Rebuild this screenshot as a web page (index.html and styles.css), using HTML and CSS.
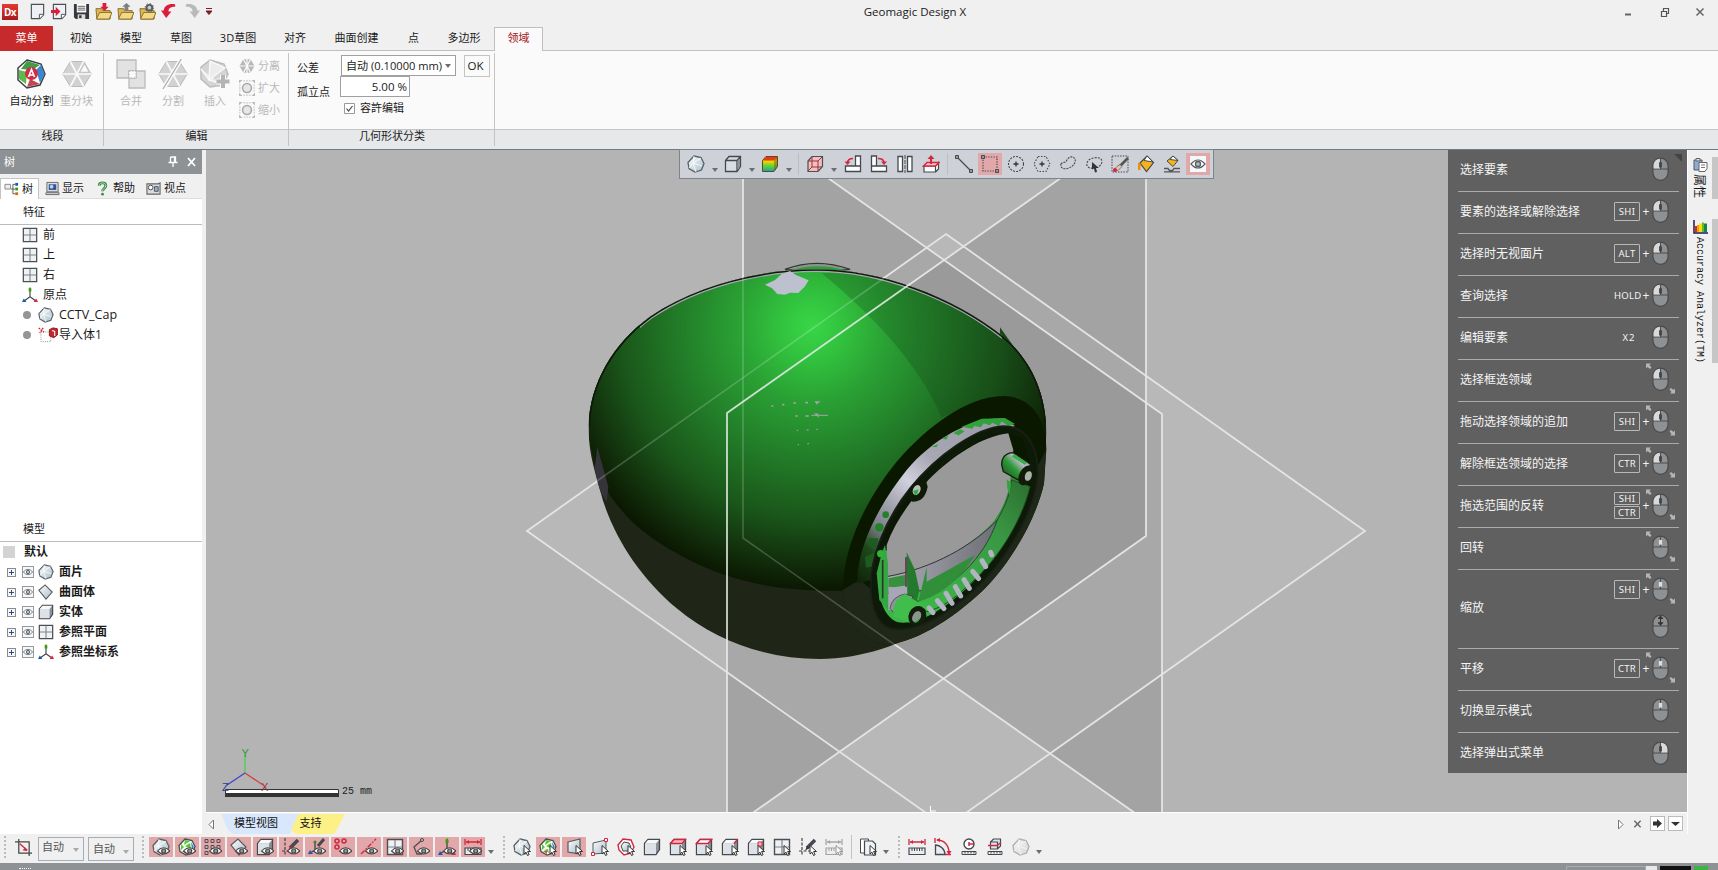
FILE: index.html
```html
<!DOCTYPE html>
<html lang="zh-CN">
<head>
<meta charset="utf-8">
<title>Geomagic Design X</title>
<link rel="stylesheet" href="styles.css">
</head>
<body>
<svg class="defs" width="0" height="0" aria-hidden="true">
<defs>
<linearGradient id="gMesh" x1="0" y1="0" x2="1" y2="1"><stop offset="0" stop-color="#fff"/><stop offset="1" stop-color="#a9bcc6"/></linearGradient>
<linearGradient id="gRain" x1="0" y1="0" x2="0" y2="1"><stop offset="0" stop-color="#f04a10"/><stop offset=".3" stop-color="#ffd400"/><stop offset=".6" stop-color="#6fd52a"/><stop offset="1" stop-color="#19a0b0"/></linearGradient>
<symbol id="mesh" viewBox="0 0 18 18"><path d="M7 1l7 1.500 3 6-2.500 6.500-6.500 2-6-3.500-1-6z" fill="url(#gMesh)" stroke="#55606a" stroke-width="1.300"/><path d="M7 1l-1 7 9 3M6 8l-4 5M6 8l8-5M6 8l3 9" stroke="#fff" stroke-width=".8" fill="none"/></symbol>
<symbol id="meshg" viewBox="0 0 18 18"><path d="M7 1l7 1.500 3 6-2.500 6.500-6.500 2-6-3.500-1-6z" fill="#f4fff0" stroke="#4a4f55" stroke-width="1.300"/><path d="M7 2l5 1-6 4zM3 6l3 3-3 3zM7 8l5-3 1 6zM5 12l4-1 1 4z" fill="#59c43a"/><path d="M13 4l3 5-2 2z" fill="#3c7fd0"/><path d="M4 13l4 0 0 3z" fill="#d85050"/></symbol>
<symbol id="cube" viewBox="0 0 18 18"><path d="M1.500 5.500L5 1.500h11.500v10L13 16.500H1.500z" fill="#8a9198" stroke="#444950" stroke-width="1.300"/><path d="M2 5.500h11v10.500H2z" fill="#dde2e9"/><path d="M2 5.500l3-3.500h11l-3 3.500z" fill="#f6f8fa"/></symbol>
<symbol id="vcube" viewBox="0 0 18 18"><path d="M1.500 5.500L5 1.500h11.500v10L13 16.500H1.500zM1.500 5.500H13v11M13 5.500l3.500-4" fill="#d9dde2" stroke="#444950" stroke-width="1.300"/><path d="M13.600 6v9.200l2.300-3.700V3.300z" fill="#8a9198"/></symbol>
<symbol id="cubetop" viewBox="0 0 18 18"><use href="#cube"/><path d="M1.500 5.500L5 1.500h11.500L13 5.500z" fill="#f9b7b7" stroke="#d22740" stroke-width="1.300"/></symbol>
<symbol id="cubeedge" viewBox="0 0 18 18"><use href="#cube"/><path d="M1.500 5.500L5 1.500h11.500L13 5.500z" fill="#fff" stroke="#d22740" stroke-width="1.500"/></symbol>
<symbol id="cubeln" viewBox="0 0 18 18"><use href="#cube"/><path d="M13 5.500l3.500-4" stroke="#d22740" stroke-width="1.600"/></symbol>
<symbol id="cubept" viewBox="0 0 18 18"><use href="#cube"/><path d="M11 4h4v4h-4z" fill="#fbb" stroke="#d22740"/></symbol>
<symbol id="raincube" viewBox="0 0 18 18"><path d="M1.500 5.500L5 1.500h11.500v10L13 16.500H1.500z" fill="url(#gRain)" stroke="#5a4a20"/><path d="M2 5.500l3-3.500h11l-3 3.500z" fill="#e83a18"/><path d="M13 5.500l3.500-4v10L13 16.500z" fill="#6d5010" opacity=".45"/></symbol>
<symbol id="wirecube" viewBox="0 0 18 18"><path d="M2 6l4-4.500h10.500v10L12 16.500H2z" fill="#f8bcbc" stroke="#4a4f55" stroke-width="1.200"/><path d="M2 6h10v10M12 6l4-4M6 2v10h10M6 12l-4 4" stroke="#8b3a40" fill="none"/></symbol>
<symbol id="viewL" viewBox="0 0 18 18"><path d="M11.500 1h5v10h-5zM1.500 11h15v5.500h-15z" fill="#fff" stroke="#444950" stroke-width="1.300"/><path d="M3.500 8c0-3 2-4.500 5.500-4.500" stroke="#d22740" stroke-width="1.600" fill="none"/><path d="M.5 6.500h6L3.500 10z" fill="#d22740"/></symbol>
<symbol id="viewR" viewBox="0 0 18 18"><path d="M1.500 1h5v10h-5zM1.500 11h15v5.500h-15z" fill="#fff" stroke="#444950" stroke-width="1.300"/><path d="M8 3.500c4 0 6 1.500 6 4.500" stroke="#d22740" stroke-width="1.600" fill="none"/><path d="M11 6.500h6L14 10z" fill="#d22740"/></symbol>
<symbol id="flip" viewBox="0 0 18 18"><path d="M2 1.500h4.500v15H2zM11.500 1.500H16v15h-4.500z" fill="#fff" stroke="#444950" stroke-width="1.300"/><path d="M9 0v18" stroke="#444950" stroke-dasharray="4 1"/></symbol>
<symbol id="normal" viewBox="0 0 18 18"><path d="M2 11h11.500v6H2zM13.500 11l3-3.500V14l-3 3" fill="#fff" stroke="#444950" stroke-width="1.200"/><path d="M1.500 11l3.500-3.500h12L13.500 11z" fill="#fbc3c3" stroke="#d22740" stroke-width="1.400"/><path d="M9 9V3" stroke="#d22740" stroke-width="2"/><path d="M5.500 4L9 0l3.500 4z" fill="#d22740"/></symbol>
<symbol id="line" viewBox="0 0 18 18"><path d="M2 2l14 14" stroke="#444950" stroke-width="1.300"/><path d="M.5.500h3v3h-3zM14.500 14.500h3v3h-3z" fill="#999" stroke="#444950"/></symbol>
<symbol id="rect" viewBox="0 0 18 18"><path d="M2 2h14v14H2z" fill="none" stroke="#444950" stroke-width="1.200" stroke-dasharray="1.300 1.300"/><path d="M.5.500h3v3h-3zM14.500 14.500h3v3h-3z" fill="#999" stroke="#444950"/></symbol>
<symbol id="circ" viewBox="0 0 18 18"><circle cx="9" cy="9" r="7.500" fill="none" stroke="#444950" stroke-width="1.100" stroke-dasharray="2 1.200"/><path d="M9 6.500v5M6.500 9h5" stroke="#333" stroke-width="1.300"/></symbol>
<symbol id="hex" viewBox="0 0 18 18"><path d="M5 1.500h8L17 9l-4 7.500H5L1 9z" fill="none" stroke="#444950" stroke-width="1.100" stroke-dasharray="1.500 1.500"/><path d="M9 6.500v5M6.500 9h5" stroke="#333" stroke-width="1.300"/></symbol>
<symbol id="blob" viewBox="0 0 18 18"><path d="M2 9c2-3 4 0 6-4s7-4 8-1-1 7-6 9-9 0-8-4z" fill="none" stroke="#444950" stroke-width="1.100" stroke-dasharray="2 1"/></symbol>
<symbol id="lasso" viewBox="0 0 18 18"><path d="M8 13c-5 1-8-3-5-7s13-5 14 0c0 3-2 5-4 6" fill="none" stroke="#444950" stroke-width="1.100" stroke-dasharray="2 1.200"/><path d="M7 7l7 6h-3l1 4-2 .5-1-4-2 1z" fill="#333"/></symbol>
<symbol id="brush" viewBox="0 0 18 18"><path d="M1 1h16v16H1z" fill="none" stroke="#444950" stroke-dasharray="1.500 1.200"/><path d="M17 3L9 11" stroke="#555" stroke-width="2.600"/><path d="M9 9.500l2 2-4 4-4-1 3-3z" fill="#e8c8a0" stroke="#555" stroke-width=".7"/><circle cx="4" cy="15" r="2" fill="#d22740"/></symbol>
<symbol id="bucket" viewBox="0 0 18 18"><path d="M3 8l7-7 6.500 6.500-7 9z" fill="#f5b51a" stroke="#444950" stroke-width="1.200"/><path d="M10 1l6 6-9-1.500z" fill="#fff" stroke="#444950"/><path d="M1 8h2.500v7H1z" fill="#f09000"/></symbol>
<symbol id="bucket2" viewBox="0 0 18 18"><path d="M4 6l6-5 5 4.500-5 6z" fill="#f5b51a" stroke="#444950"/><path d="M10 1l5 4.500-8-1z" fill="#fff" stroke="#444950"/><path d="M1 13.500h4c1 3 5 3 6 0h6M1 16.800h16" stroke="#555" fill="none" stroke-width="1.300"/></symbol>
<symbol id="eyebox" viewBox="0 0 18 18"><path d="M1 1h16v16H1z" fill="#f4f8fb"/><path d="M2 9q7-8 14 0-7 8-14 0z" fill="#fff" stroke="#555b60" stroke-width="1.200"/><circle cx="9" cy="9" r="2.500" fill="#bbb" stroke="#555b60" stroke-width="1.300"/></symbol>
<symbol id="eye" viewBox="0 0 18 18"><path d="M5.500 13q6-6.500 12.500 0-6.500 6-12.500 0z" fill="#fff" stroke="#444" stroke-width="1.100"/><circle cx="11.700" cy="13" r="2" fill="#999" stroke="#444" stroke-width="1.200"/></symbol>
<symbol id="cur" viewBox="0 0 18 18"><path d="M11 7.500v8.500l2-1.800 1.500 3.300 1.600-.8-1.500-3.200H17.500z" fill="#fff" stroke="#333" stroke-width="1"/></symbol>
<symbol id="grid9" viewBox="0 0 18 18"><g fill="none" stroke="#4a4f55"><path d="M1 1.500h3v3H1zM7 1.500h3v3H7zM13 1.500h3v3h-3zM1 7.500h3v3H1zM7 7.500h3v3H7zM13 7.500h3v3h-3zM1 13.500h3v3H1z"/></g></symbol>
<symbol id="diam" viewBox="0 0 18 18"><path d="M1 7l7-6 8 8-7 8z" fill="url(#gMesh)" stroke="#555b60" stroke-width="1.200"/></symbol>
<symbol id="sketch" viewBox="0 0 18 18"><path d="M3 0v18M0 13h18" stroke="#444" stroke-width="1.200" stroke-dasharray="3 1.500"/><path d="M16 2L8 10" stroke="#444a50" stroke-width="3.500"/><path d="M8 8l2 2-4 3z" fill="#d22740"/></symbol>
<symbol id="sketchk" viewBox="0 0 18 18"><path d="M3 0v18M0 13h18" stroke="#444" stroke-width="1.200" stroke-dasharray="3 1.500"/><path d="M16 2L8 10" stroke="#444a50" stroke-width="3.500"/><path d="M8 8l2 2-4 3z" fill="#333"/></symbol>
<symbol id="sketch3" viewBox="0 0 18 18"><path d="M7 4v8l-6 4M7 12l6 4" stroke="#444" fill="none" stroke-width="1.300"/><path d="M16 1l-6 7" stroke="#444a50" stroke-width="3"/><circle cx="7" cy="4" r="1.600" fill="#388e1c"/><path d="M0 16l2-4 3 4z" fill="#1c5bb0"/></symbol>
<symbol id="pts" viewBox="0 0 18 18"><g fill="none" stroke="#d22740" stroke-width="1.500"><circle cx="3" cy="3" r="2"/><circle cx="10" cy="3" r="2"/><circle cx="3" cy="9" r="2"/></g></symbol>
<symbol id="rline" viewBox="0 0 18 18"><path d="M1 16L16 1" stroke="#d22740" stroke-width="1.400" stroke-dasharray="5 1.500 1.500 1.500"/></symbol>
<symbol id="plane" viewBox="0 0 18 18"><path d="M1.500 1.500h15v15h-15z" fill="#eff1f2" stroke="#4a4f55" stroke-width="1.400"/><path d="M9 2v14M2 9h14" stroke="#7d8388" stroke-width="1.200"/></symbol>
<symbol id="curve" viewBox="0 0 18 18"><path d="M10 2L2 9l3 7h5" fill="none" stroke="#4a4f55" stroke-width="1.300"/><circle cx="10" cy="2" r="1.500" fill="#ccc" stroke="#444"/></symbol>
<symbol id="axes" viewBox="0 0 18 18"><path d="M9 3v8l-7 5M9 11l7 5" stroke="#444" fill="none" stroke-width="1.300"/><path d="M7.500 5V2L9 0l1.500 2v3z" fill="#3a9a10"/><path d="M0 17l2-4 3 4z" fill="#1c5bb0"/><path d="M18 17l-2-4-3 4z" fill="#d22740"/></symbol>
<symbol id="dim" viewBox="0 0 18 18"><path d="M1 1v6M17 1v6M2 4h14" stroke="#d22740" stroke-width="1.300" fill="none"/><path d="M2 4l3-2v4zM16 4l-3-2v4z" fill="#d22740"/><path d="M1 10h16v6.500H1z" fill="#e9edf1" stroke="#444950" stroke-width="1.200"/><path d="M4 10v3M6.500 10v3M9 10v3M11.500 10v3M14 10v3" stroke="#444"/></symbol>
<symbol id="quad" viewBox="0 0 18 18"><path d="M3 4l12-3v15l-12-2z" fill="url(#gMesh)" stroke="#555b60" stroke-width="1.200"/></symbol>
<symbol id="quadpt" viewBox="0 0 18 18"><path d="M2 5l13-3v13l-13 1z" fill="url(#gMesh)" stroke="#555b60"/><path d="M13.500.500h3v3h-3zM.5 14.500h3v3h-3z" fill="#fff" stroke="#d22740"/></symbol>
<symbol id="ring" viewBox="0 0 18 18"><path d="M6 1l8 1 3 7-3 6-7 2-5-5-1-5z" fill="#fff" stroke="#d22740" stroke-width="1.400"/><path d="M7 4l5 1 2 4-3 4-5 0-2-5z" fill="url(#gMesh)" stroke="#444"/></symbol>
<symbol id="docs" viewBox="0 0 18 18"><path d="M1.500 1h8v14h-8z" fill="#fff" stroke="#444950"/><path d="M5.500 3h8l3 3v11h-11z" fill="#eef1f5" stroke="#444950" stroke-width="1.200"/></symbol>
<symbol id="angle" viewBox="0 0 18 18"><path d="M1.500 7v9.500H11C11 11 6 7 1.500 7z" fill="#e9edf1" stroke="#444950" stroke-width="1.300"/><path d="M3 2c7 0 12 5 12 13M1 0v5M11 16.500h6" stroke="#d22740" stroke-width="1.400" fill="none"/><path d="M2 2l4-2v4zM15 17l-2.500-4h5z" fill="#d22740"/></symbol>
<symbol id="radius" viewBox="0 0 18 18"><circle cx="9" cy="6" r="5" fill="#fff" stroke="#444950" stroke-width="1.400"/><path d="M9 4v4M9 6h5" stroke="#d22740" stroke-width="1.500"/><path d="M2 13.500h14v3H2z" fill="#eee" stroke="#444950"/><path d="M5 14v1.500M8 14v1.500M11 14v1.500M14 14v1.500" stroke="#444"/></symbol>
<symbol id="thick" viewBox="0 0 18 18"><path d="M4.500 4l3-3h7v7l-3 3h-7zM4.500 4h7v7" fill="#dfe4ea" stroke="#444950" stroke-width="1.200"/><path d="M2 7.500h9l4-3" stroke="#d22740" stroke-width="1.500" fill="none"/><path d="M2 13.500h14v3H2z" fill="#eee" stroke="#444950"/><path d="M5 14v1.500M8 14v1.500M11 14v1.500M14 14v1.500" stroke="#444"/></symbol>
<symbol id="crop" viewBox="0 0 18 18"><path d="M4 0v15h14M0 3h15v15" fill="none" stroke="#444" stroke-width="1.300"/><path d="M5 5l8 7" stroke="#d22740" stroke-width="1.500"/><path d="M13 13l-5-1 3-3z" fill="#d22740"/></symbol>
<symbol id="folder" viewBox="0 0 18 18"><path d="M1 6h6l1 2h8v9H2z" fill="#d9b85c" stroke="#8b6b21"/><path d="M5 10h13l-3 7H1.500z" fill="#f2d98a" stroke="#8b6b21"/></symbol>
<symbol id="doc" viewBox="0 0 18 18"><path d="M2.500 1.500h13v11l-4 4h-9z" fill="#edf0f4" stroke="#4a4f57" stroke-width="1.200"/><path d="M11 16.500v-4.500h4.500" fill="#fff" stroke="#4a4f57"/></symbol>
<symbol id="wheel" viewBox="0 0 18 18"><path d="M5 1.500h8L17.500 9 13 16.500H5L.5 9z" fill="#d2d2d2" stroke="#bbb" stroke-width=".6"/><path d="M5 1.500l8 15M13 1.500l-8 15M.5 9h17" stroke="#fafafa" stroke-width="1"/></symbol>
<symbol id="wheels" viewBox="0 0 18 18"><path d="M5 1.500h8L17.500 9 13 16.500H5L.5 9z" fill="#b8b8b8"/><path d="M5 1.500l8 15M13 1.500l-8 15M.5 9h17M9 0v18" stroke="#fafafa" stroke-width="1.300"/></symbol>
<symbol id="size" viewBox="0 0 18 18"><circle cx="9" cy="9" r="5" fill="#e6e6e6" stroke="#aaa" stroke-width="1.800"/><path d="M5 1h8M5 17h8M1 5v8M17 5v8" stroke="#bbb" stroke-dasharray="2 1"/><path d="M0 0h4L0 4zM18 0v4l-4-4zM0 18v-4l4 4zM18 18h-4l4-4z" fill="#bbb"/></symbol>
<symbol id="mouse" viewBox="0 0 18 26"><rect x="1" y="1" width="16" height="23.500" rx="8" fill="#8d9194" stroke="#4a4a4a" stroke-width="1.300"/><path d="M1 12.500h16M9 1v11" stroke="#4c4c4c" stroke-width="1.200"/></symbol>
<symbol id="mL" viewBox="0 0 18 26"><use href="#mouse"/><path d="M8.400 1.700C4 2 1.700 5 1.700 9v3h6.700z" fill="#d9d9d9"/><rect x="7.500" y="5" width="3" height="6" rx="1" fill="#444"/></symbol>
<symbol id="mR" viewBox="0 0 18 26"><use href="#mouse"/><path d="M9.600 1.700C14 2 16.300 5 16.300 9v3H9.600z" fill="#d9d9d9"/><rect x="7.500" y="5" width="3" height="6" rx="1" fill="#444"/></symbol>
<symbol id="mM" viewBox="0 0 18 26"><use href="#mouse"/><rect x="7.300" y="5" width="3.400" height="5" fill="#ddd"/></symbol>
<symbol id="mS" viewBox="0 0 18 26"><use href="#mouse"/><path d="M9 3v7M6.500 4.500L9 2l2.500 2.500zM6.500 9L9 11.500 11.500 9z" stroke="#333" fill="#333"/></symbol>
<symbol id="drag" viewBox="0 0 30 30"><path d="M0 0h5L3.500 1.500 5.500 4 4 5.500 1.500 3.500 0 5zM29 30h-5l1.500-1.500-2-2.500 1.500-1.500 2.500 2 1.500-1.500z" fill="#b5b5b5"/></symbol>
</defs>
</svg>
<div class="app">
<header class="title">
  <div class="quick">
    <span class="logo">Dx</span>
    <svg><use href="#doc"/></svg>
    <svg viewBox="0 0 18 18"><use href="#doc"/><path d="M0 7.500h5V4l5 5-5 5v-3.500H0z" fill="#d81e3c"/></svg>
    <svg viewBox="0 0 18 18"><path d="M1 1h16v16H3l-2-2z" fill="#34383d"/><path d="M4 1h10v9H4z" fill="#fff"/><path d="M5 3.500h8M5 5.500h8M5 7.500h8" stroke="#555"/><path d="M5 12h8v5H5z" fill="#ddd"/><path d="M6.500 13h2.500v3H6.500z" fill="#333"/></svg>
    <svg viewBox="0 0 18 18"><use href="#folder"/><path d="M8 0h4v4h2.500L10 8.500 5.500 4H8z" fill="#d81e3c"/></svg>
    <svg viewBox="0 0 18 18"><use href="#folder"/><path d="M8 8h4V4h2.500L10 0 5.500 4H8z" fill="#7b8085"/></svg>
    <svg viewBox="0 0 18 18"><use href="#folder"/><circle cx="11" cy="5" r="3" fill="#ccc" stroke="#555b60" stroke-width="2"/><circle cx="11" cy="5" r="4.500" fill="none" stroke="#555b60" stroke-dasharray="1.500 2"/></svg>
    <svg viewBox="0 0 18 18"><path d="M15 1.500C9 0 3 3 3 8H0l5.500 8L11 9H8c-.5-3 2-5 7-5z" fill="#d81e3c"/></svg>
    <svg viewBox="0 0 18 18"><path d="M3 1.500C9 0 15 3 15 8h3l-5.500 8L7 9h3c.5-3-2-5-7-5z" fill="#b9b9b9"/></svg>
    <svg class="more" viewBox="0 0 8 9"><path d="M1 1.500h6M1 4h6L4 7.500z" stroke="#7b1d26" fill="#7b1d26"/></svg>
  </div>
  <h1>Geomagic Design X</h1>
  <div class="win"><svg viewBox="0 0 90 20"><path d="M5 12.500h6" stroke="#666" stroke-width="2"/><path d="M41.500 9.500h5v5h-5zM43.500 9V6.500h5v5H47" fill="none" stroke="#555" stroke-width="1.200"/><path d="M76.500 6.500l7 7M83.500 6.500l-7 7" stroke="#666" stroke-width="1.500"/></svg></div>
</header>
<nav class="tabs">
  <span class="menu w53">菜单</span><span class="w53 first">初始</span><span class="w50">模型</span><span class="w50">草图</span><span class="w64">3D草图</span><span class="w50">对齐</span><span class="w73">曲面创建</span><span class="w41">点</span><span class="w60">多边形</span><span class="on">领域</span><i></i>
</nav>
<section class="ribbon">
  <div class="group seg">
    <div class="body">
      <div class="big on"><svg viewBox="0 0 30 30"><path d="M10 1l14 4 4 10-5 11-13 3-9-8 0-12z" fill="#fff" stroke="#3c4046" stroke-width="1.500"/><path d="M10 2l13 4-8 5-11-1z" fill="#3f9d43"/><path d="M24 6l3.500 9-4.500 9-4-13z" fill="#3a86cf"/><path d="M2 11l8 2-1 12-7-5z" fill="#5dbb4a"/><path d="M10 28l3-8 10 5z" fill="#c04a50"/><circle cx="14.500" cy="14.500" r="6.500" fill="#d42a45"/><path d="M11.500 18l3-7.500 3 7.500M12.500 16h4" stroke="#fff" stroke-width="1.700" fill="none"/></svg><b>自动分割</b></div>
      <div class="big"><svg viewBox="0 0 18 18"><use href="#wheel"/><path d="M13.500 2.500l3 5.500h-6z" fill="#fafafa" stroke="#c4c4c4" stroke-width=".8"/></svg><b>重分块</b></div>
    </div>
    <footer>线段</footer>
  </div>
  <div class="group edit">
    <div class="body">
      <div class="big"><svg viewBox="0 0 30 30"><path d="M1 1h19v18H1zM13 12h16v17H13z" fill="#e2e2e2" stroke="#bbb" stroke-width="1.300"/><path d="M13 12h7v7h-7z" fill="#fafafa" stroke="#aaa" stroke-dasharray="1.500 1.500"/></svg><b>合并</b></div>
      <div class="big"><svg viewBox="0 0 18 18"><use href="#wheel"/><path d="M14 0L3 18" stroke="#fafafa" stroke-width="2.500"/><path d="M14 0L3 18" stroke="#aaa" stroke-width=".7"/></svg><b>分割</b></div>
      <div class="big"><svg viewBox="0 0 30 30"><path d="M10 1l14 4 4 10-5 11-13 2-9-8 0-12z" fill="#d4d4d4" stroke="#bbb" stroke-width="1.500"/><path d="M10 2l-1 19 16-12zM1 10l8 11 14 5" fill="#ececec" stroke="#fafafa" stroke-width="1.300"/><path d="M23 16v13M16.500 22.500h13" stroke="#fafafa" stroke-width="6"/><path d="M23 16v13M16.500 22.500h13" stroke="#b4b4b4" stroke-width="4"/></svg><b>插入</b></div>
      <ul class="small"><li><svg><use href="#wheels"/></svg>分离</li><li><svg><use href="#size"/></svg>扩大</li><li><svg><use href="#size"/></svg>缩小</li></ul>
    </div>
    <footer>编辑</footer>
  </div>
  <div class="group shape">
    <div class="body form">
      <div class="row"><label>公差</label><span class="select">自动 (0.10000 mm)<i class="arr"></i></span><span class="btn">OK</span></div>
      <div class="row iso"><label>孤立点</label><span class="input">5.00 %</span></div>
      <div class="row allow"><svg viewBox="0 0 11 11"><path d="M.5.500h10v10H.5z" fill="#fff" stroke="#999"/><path d="M2.500 5.500l2 2.500 4-5" fill="none" stroke="#444" stroke-width="1.200"/></svg><span>容許编辑</span></div>
    </div>
    <footer>几何形状分类</footer>
  </div>
  <div class="group rest"><div class="body"></div><footer></footer></div>
</section>
<main>
  <aside class="side">
    <div class="head"><span>树</span><svg viewBox="0 0 34 14"><path d="M7.500 2h5v5.500M7.500 2v5.500M5.500 7.500h9M10 8v4M11.500 2v5.500" fill="none" stroke="#fff" stroke-width="1.300"/><path d="M25 3l7 8M32 3l-7 8" stroke="#fff" stroke-width="1.800"/></svg></div>
    <div class="stabs">
      <span class="on"><svg viewBox="0 0 16 16"><path d="M1 2.500h6v5H1z" fill="#eee" stroke="#888"/><path d="M12 2.500H9.500v10H12M7.500 7.500H12" fill="none" stroke="#555"/><path d="M12 1h3v3h-3z" fill="#1c5bb0"/><path d="M12 6h3v3h-3z" fill="#3a9a10"/><path d="M12 11h3v3h-3z" fill="#d66a10"/></svg>树</span>
      <span class="disp"><svg viewBox="0 0 16 16"><path d="M2 1.500h12v10H2zM1 12.500h14v2H1z" fill="#ddd" stroke="#666"/><path d="M4 3.500h8v6H4z" fill="#2856a0"/><circle cx="7" cy="6" r="2" fill="#ccd"/></svg>显示</span>
      <span class="help"><svg viewBox="0 0 16 16"><path d="M4.500 5c0-4 7-4 7 0 0 3-3.500 3-3.500 6" fill="none" stroke="#3d8a44" stroke-width="3"/><path d="M4.500 5c0-4 7-4 7 0 0 3-3.500 3-3.500 6" fill="none" stroke="#b9e0b8"/><circle cx="8" cy="14" r="1.500" fill="#3d8a44"/></svg>帮助</span>
      <span class="vpt"><svg viewBox="0 0 16 16"><path d="M1 3h12l2-1v12H1z" fill="#ddd" stroke="#666" stroke-width="1.200"/><circle cx="5" cy="7" r="2.500" fill="#fff" stroke="#444"/><path d="M9 6h4v5H9z" fill="#8ab0dc" stroke="#555"/></svg>视点</span>
    </div>
    <div class="tree">
      <h2>特征</h2>
      <ul>
        <li><svg><use href="#plane"/></svg>前</li>
        <li><svg><use href="#plane"/></svg>上</li>
        <li><svg><use href="#plane"/></svg>右</li>
        <li><svg><use href="#axes"/></svg>原点</li>
        <li class="sub cap"><i class="dot"></i><svg><use href="#mesh"/></svg>CCTV_Cap</li>
        <li class="sub imp"><i class="dot"></i><svg viewBox="0 0 22 18"><path d="M2.500 5.500h11v11h-11z" fill="#fff" stroke="#777" stroke-dasharray="1 1.500"/><path d="M0 1l6 5M5 1L1 7" stroke="#d22740" stroke-width="1.500" stroke-dasharray="2 1"/><path d="M12 3l4-2 5 1v7l-4 3-5-2z" fill="#c4262e" stroke="#7d1218"/><path d="M15 4l3 1v5" stroke="#fff" stroke-width="1.200" fill="none"/></svg>导入体1</li>
      </ul>
    </div>
    <div class="model">
      <h2>模型</h2>
      <ul>
        <li class="def"><i class="sq"></i>默认</li>
        <li><i class="plus"></i><svg class="ey"><use href="#eyebox"/></svg><svg><use href="#mesh"/></svg>面片</li>
        <li><i class="plus"></i><svg class="ey"><use href="#eyebox"/></svg><svg><use href="#diam"/></svg>曲面体</li>
        <li><i class="plus"></i><svg class="ey"><use href="#eyebox"/></svg><svg><use href="#cube"/></svg>实体</li>
        <li><i class="plus"></i><svg class="ey"><use href="#eyebox"/></svg><svg><use href="#plane"/></svg>参照平面</li>
        <li><i class="plus"></i><svg class="ey"><use href="#eyebox"/></svg><svg><use href="#axes"/></svg>参照坐标系</li>
      </ul>
    </div>
  </aside>
  <section class="center">
    <div class="view">
      <svg class="scene" viewBox="206 150 1481 662">
        <defs>
          <radialGradient id="gBody" gradientUnits="userSpaceOnUse" cx="755" cy="320" r="800"><stop offset="0" stop-color="#38d647"/><stop offset=".12" stop-color="#32c23e"/><stop offset=".28" stop-color="#2aa134"/><stop offset=".5" stop-color="#227c28"/><stop offset=".72" stop-color="#1a561a"/><stop offset=".88" stop-color="#12300c"/><stop offset="1" stop-color="#0a1500"/></radialGradient>
          <linearGradient id="gBand" gradientUnits="userSpaceOnUse" x1="1320" y1="600" x2="900" y2="1080"><stop offset="0" stop-color="#9a9aa6"/><stop offset=".35" stop-color="#a8a8b4"/><stop offset=".5" stop-color="#d0d0de"/><stop offset=".75" stop-color="#80808c"/><stop offset=".86" stop-color="#1d4a1a"/><stop offset="1" stop-color="#12250c"/></linearGradient>
          <linearGradient id="gInner" x1="1" y1="0" x2="0" y2="1"><stop offset="0" stop-color="#2c6e30"/><stop offset=".35" stop-color="#3a9844"/><stop offset="1" stop-color="#3cba48"/></linearGradient>
          <linearGradient id="gWedge"><stop offset="0" stop-color="#adadb7"/><stop offset="1" stop-color="#6d6d76"/></linearGradient>
          <linearGradient id="gTube" x1="0" y1="1" x2="1" y2="0"><stop offset="0" stop-color="#123f12"/><stop offset=".45" stop-color="#2f9a3a"/><stop offset=".65" stop-color="#b6b6c4"/><stop offset="1" stop-color="#a6a6b4"/></linearGradient>
          <path id="bodyShape" d="M86 620C88 490 160 370 270 290C410 195 600 148 770 148C960 148 1180 230 1330 350C1420 425 1459 530 1459 640C1456 760 1420 870 1360 980C1300 1085 1220 1150 1130 1210C1030 1275 900 1317 780 1317C620 1317 470 1265 350 1165C230 1065 150 930 120 810C98 730 86 690 86 620z"/>
          <clipPath id="cBody"><use href="#bodyShape"/></clipPath>
          <clipPath id="cUpper"><path d="M80 120H1470V620H80z"/></clipPath>
          <clipPath id="cRim"><path d="M240 120H1325V360H240z"/></clipPath>
        </defs>
        <path fill="#b4b4b4" d="M206 150h1481v662H206z"/>
        <path d="M743 118L1162 414V832L743 538z" fill="#000" fill-opacity=".09"/>
        <path d="M727 413L1146 118V536L727 831z" fill="#000" fill-opacity=".09"/>
        <path d="M946 234L1365 531 946 827 527 531z" fill="#fff" fill-opacity=".06"/>
        <g fill="none" stroke="#e4e4e4" stroke-width="1.800"><path d="M743 118L1162 414V832L743 538z"/><path d="M727 413L1146 118V536L727 831z"/><path d="M946 234L1365 531 946 827 527 531z"/></g>
        <g transform="translate(560 220) scale(.33333)">
          <path d="M675 148Q770 112 870 148L770 158z" fill="#8f9490" stroke="#303530" stroke-width="4"/>
          <path d="M690 152Q770 126 860 152z" fill="#2e9c39"/>
          <path d="M1320 360V322L1390 420z" fill="#174817"/>
          <g clip-path="url(#cBody)">
            <path d="M80 120H1470V1330H80z" fill="#1f2617"/>
            <path d="M80 120H1470V690L1430 750 900 1080 870 1112C600 1118 450 1065 300 970C190 900 140 820 105 740L80 620z" fill="url(#gBody)"/>
            <path d="M785 160C930 280 1070 420 1145 592L1300 530 1470 560V120z" fill="#103010" fill-opacity=".22"/>
            <path d="M112 680L145 800 140 845 118 810 104 745z" fill="#34343a"/>
            <g clip-path="url(#cRim)"><use href="#bodyShape" fill="none" stroke="#a9a9b2" stroke-width="16"/></g>
            <g clip-path="url(#cUpper)"><use href="#bodyShape" fill="none" stroke="#10180c" stroke-width="9"/></g>
          </g>
          <path d="M615 194L645 180 665 162 690 153 708 165 746 181 734 200 715 219 690 218 675 224 652 222 636 205z" fill="#bcc0cf"/>
          <path d="M754 586h50M763 580l14 12" stroke="#a4a4ac" stroke-width="3"/>
          <path d="M736 548h8M765 546h14M700 549h8M667 554h6M634 558h6M736 588h10M706 588h7M767 583h8M768 550h5" stroke="#a4a4ac" stroke-width="5"/><path d="M740 630h6M769 628h5M710 631h4M742 671h5M713 674h4" stroke="#a4a4ac" stroke-width="3"/>
          <path d="M848 1110C850 1000 900 860 1010 725C1100 620 1220 530 1330 528C1410 530 1458 590 1459 690L1452 790C1430 890 1360 1020 1270 1110C1170 1205 1050 1275 970 1273C900 1260 855 1200 848 1110z" fill="#0b1800"/>
          <path d="M848 1110L900 1080 960 1130 1430 745 1458 690 1452 790C1430 890 1360 1020 1270 1110C1170 1205 1050 1275 970 1273C900 1260 855 1200 848 1110z" fill="#1f2818"/>
          <path d="M892 1090C890 980 960 850 1040 750C1120 655 1240 590 1330 596L1365 618 1200 680 1000 900 935 1080z" fill="url(#gBand)"/>
          <path d="M1180 640l20-12 14 6-18 12zM1205 620l60-24 70-2 30 18-20 6-20-14-8 14-20-10-8 8-18-6-8 12-20-4-6 8zM1115 680l20-8-6 10zM1145 655l20-8-6 12z" fill="#31a13b"/>
          <circle cx="977" cy="884" r="10" fill="#23812a"/><circle cx="958" cy="922" r="13" fill="#23812a"/><path d="M925 955l30 0-6 28-24-5zM915 1010l28-12v40l-25 5z" fill="#1d5b20"/>
          <path d="M932 1100C930 1020 970 905 1050 805C1130 705 1250 622 1330 618C1400 618 1434 680 1434 760C1425 880 1330 1040 1220 1130C1140 1200 1050 1240 990 1225C950 1210 934 1160 932 1100z" fill="#0e1a08" stroke="#1a2018" stroke-width="5"/>
          <path d="M955 1080C958 960 1040 840 1110 770C1190 690 1270 640 1340 640C1390 650 1410 720 1410 790C1395 890 1310 1020 1220 1105C1140 1180 1065 1215 1015 1207C975 1195 955 1140 955 1080z" fill="url(#gInner)"/>
          <path d="M1340 636L1388 655 1412 730 1410 800 1355 770z" fill="#0b1800"/>
          <path d="M955 1000C960 940 1040 830 1110 768C1190 690 1270 638 1340 638L1350 650 1100 820 985 990z" fill="#0c1604"/>
          <path d="M980 975C1005 905 1050 845 1105 780C1180 705 1270 648 1345 640L1360 690 1350 790C1340 840 1325 870 1300 905C1230 980 1120 1045 980 1068z" fill="#999"/>
          <path d="M980 1070C1120 1045 1240 975 1312 900C1290 975 1230 1060 1170 1105L985 1120z" fill="url(#gWedge)" stroke="#333" stroke-width="3"/>
          <path d="M1312 900C1340 850 1350 820 1355 780L1410 800C1380 920 1300 1035 1220 1100C1180 1140 1140 1165 1100 1175L1070 1145C1180 1100 1270 1020 1312 900z" fill="url(#gInner)" stroke="#244c25" stroke-width="3"/>
          <path d="M1075 1145L1100 1042 1100 1085 1245 1005C1210 1065 1150 1125 1075 1145z" fill="#318f3a"/>
          <g fill="none" stroke="#b3b4c1" stroke-width="15" stroke-linecap="round"><path d="M1107 1164l12 14M1132 1142l20 24M1158 1120l18 30M1186 1100l16 28M1212 1079l16 26M1238 1054l18 22M1266 1022l11 18M1292 997l3 8"/></g>
          <path d="M985 1075L1035 1065V1105L985 1100z" fill="#36903d"/><path d="M985 1104L1070 1092V1140L1000 1170H985z" fill="#a6a6b4"/>
          <path d="M1040 997L1065 1050 1078 1110 1070 1145 1042 1130z" fill="#247a2c"/><path d="M1038 1012V1100" stroke="#66324f" stroke-width="5"/>
          <path d="M975 975L984 1030V1170L958 1140 950 1060 965 1000z" fill="#35a641"/><path d="M968 1020v115" stroke="#243e22" stroke-width="5"/><circle cx="962" cy="1001" r="11" fill="#2db338"/>
          <path d="M990 1165Q995 1130 1035 1122L1060 1130 1010 1190z" fill="#92929e" stroke="#333" stroke-width="2"/>
          <path d="M1000 1165Q1010 1130 1035 1122L1095 1160 1060 1212 1000 1190z" fill="#41bd4c"/>
          <ellipse cx="1072" cy="1188" rx="26" ry="31" transform="rotate(25 1072 1188)" fill="#121d0c"/><ellipse cx="1070" cy="1190" rx="12" ry="18" transform="rotate(30 1070 1190)" fill="#8b9590"/><path d="M1062 1207q12 5 17-12z" fill="#35a641"/>
          <path d="M1325 735Q1325 700 1360 698L1412 733 1385 785 1330 755z" fill="url(#gTube)" stroke="#142010" stroke-width="4"/><path d="M1362 702l40 26-8 6-38-24z" fill="#38b143"/><ellipse cx="1398" cy="766" rx="20" ry="32" transform="rotate(28 1398 766)" fill="#101c08"/><ellipse cx="1405" cy="768" rx="10" ry="15" transform="rotate(20 1405 768)" fill="#aab3ac"/>
          <path d="M1340 778l14 10-5 36-7-18z" fill="#33a23f"/>
          <path d="M1045 820Q1060 775 1095 772L1103 800Q1095 845 1058 845L1045 840z" fill="#0e1a06"/><ellipse cx="1070" cy="810" rx="11" ry="16" transform="rotate(25 1070 810)" fill="#b7bfbb"/><path d="M1060 812l16-4-4 14-8 4z" fill="#38a942"/>
        </g>
        <g fill="none" stroke="#fff" stroke-opacity=".2" stroke-width="1.600"><path d="M743 275V538L895 645"/><path d="M884 278L597 481"/></g>
        <path d="M910 284L727 413V640" fill="none" stroke="#dfe9df" stroke-opacity=".9" stroke-width="1.800"/>
        <path d="M930.500 806v7M930 811h6" stroke="#fff" fill="none"/>
        <g fill="none" stroke-width="1.400"><path d="M245 773v-18" stroke="#4fd24f"/><path d="M245 773l18 12" stroke="#d84040"/><path d="M245 773l-18 12" stroke="#4444d0"/></g>
        <path d="M225.500 789.500h113v6h-113z" fill="#fff" stroke="#333"/><path d="M225 793h114v4H225z" fill="#333"/>
        <g class="ax"><text x="241.500" y="757" fill="#2f9b37">Y</text><text x="261" y="791" fill="#a02c2c">X</text><text x="222" y="791" fill="#3434a0">Z</text></g>
        <text class="mm" x="342" y="794">25 mm</text>
      </svg>
      <div class="vbar">
        <svg><use href="#mesh"/></svg><i class="arr"></i><svg><use href="#vcube"/></svg><i class="arr"></i><svg><use href="#raincube"/></svg><i class="arr"></i><i class="sep"></i><svg><use href="#wirecube"/></svg><i class="arr"></i>
        <span><svg><use href="#viewL"/></svg></span><span><svg><use href="#viewR"/></svg></span><span><svg><use href="#flip"/></svg></span><span><svg><use href="#normal"/></svg></span><i class="sep"></i>
        <span><svg><use href="#line"/></svg></span><span class="pk"><svg><use href="#rect"/></svg></span><span><svg><use href="#circ"/></svg></span><span><svg><use href="#hex"/></svg></span><span><svg><use href="#blob"/></svg></span><span><svg><use href="#lasso"/></svg></span><span><svg><use href="#brush"/></svg></span><span><svg><use href="#bucket"/></svg></span><span><svg><use href="#bucket2"/></svg></span><span class="pk"><svg><use href="#eyebox"/></svg></span>
      </div>
      <ul class="hints">
        <li>选择要素<span class="m"><svg><use href="#mL"/></svg></span><i class="corner"></i></li>
        <li>要素的选择或解除选择<kbd>SHI</kbd><em>+</em><span class="m"><svg><use href="#mL"/></svg></span></li>
        <li>选择时无视面片<kbd>ALT</kbd><em>+</em><span class="m"><svg><use href="#mL"/></svg></span></li>
        <li>查询选择<kbd class="no">HOLD</kbd><em>+</em><span class="m"><svg><use href="#mL"/></svg></span></li>
        <li>编辑要素<kbd class="no x2">X2</kbd><em></em><span class="m"><svg><use href="#mL"/></svg></span></li>
        <li>选择框选领域<span class="m"><svg><use href="#mL"/></svg><svg class="dr"><use href="#drag"/></svg></span></li>
        <li>拖动选择领域的追加<kbd>SHI</kbd><em>+</em><span class="m"><svg><use href="#mL"/></svg><svg class="dr"><use href="#drag"/></svg></span></li>
        <li>解除框选领域的选择<kbd>CTR</kbd><em>+</em><span class="m"><svg><use href="#mL"/></svg><svg class="dr"><use href="#drag"/></svg></span></li>
        <li>拖选范围的反转<span class="two"><kbd>SHI</kbd><kbd>CTR</kbd></span><em>+</em><span class="m"><svg><use href="#mL"/></svg><svg class="dr"><use href="#drag"/></svg></span></li>
        <li>回转<span class="m"><svg><use href="#mM"/></svg><svg class="dr"><use href="#drag"/></svg></span></li>
        <li class="tall">缩放<div class="stack"><div><kbd>SHI</kbd><em>+</em><span class="m"><svg><use href="#mM"/></svg><svg class="dr"><use href="#drag"/></svg></span></div><div><span class="m"><svg><use href="#mS"/></svg></span></div></div></li>
        <li>平移<kbd>CTR</kbd><em>+</em><span class="m"><svg><use href="#mM"/></svg><svg class="dr"><use href="#drag"/></svg></span></li>
        <li>切换显示模式<span class="m"><svg><use href="#mM"/></svg></span></li>
        <li>选择弹出式菜单<span class="m"><svg><use href="#mR"/></svg></span></li>
      </ul>
    </div>
    <div class="vtabs">
      <svg class="la" viewBox="0 0 8 12"><path d="M6.500 2v9L2 6.500z" fill="#fff" stroke="#777"/></svg>
      <span class="blue">模型视图</span><span class="yel">支持</span>
      <div class="ctl"><svg viewBox="0 0 8 12"><path d="M2 2v9l4.500-4.500z" fill="#fff" stroke="#777"/></svg><svg viewBox="0 0 10 12"><path d="M1.500 2.500l7 7M8.500 2.500l-7 7" stroke="#666" stroke-width="1.600"/></svg><b><svg viewBox="0 0 13 13"><path d="M2 4.500h4V2l5 4.500L6 11V8.500H2z" fill="#333"/></svg></b><b><svg viewBox="0 0 13 13"><path d="M2 5h9l-4.500 4z" fill="#333"/></svg></b></div>
    </div>
  </section>
  <aside class="rail">
    <div class="items">
      <svg viewBox="0 0 15 14"><path d="M1 2h8v10H1z" fill="#8aaed6" stroke="#555b60"/><path d="M3 .5h4v2.500H3z" fill="#ddd" stroke="#666"/><path d="M6 4.500h8v6l-2 3H6z" fill="#fff" stroke="#666"/><path d="M8 7h4M8 9.500h4" stroke="#777"/></svg>
      <span class="p">属性</span>
      <svg class="acc" viewBox="0 0 15 14"><path d="M2 12V6h2v6z" fill="#e02a1c"/><path d="M4 12V5h2v7z" fill="#f59a10"/><path d="M6 12V3.500h3V12z" fill="#f4dc1c"/><path d="M9 12V2.500h2V12z" fill="#6ab81e"/><path d="M11 12V3.500h3V12z" fill="#19844a"/><path d="M1 0v13h14" fill="none" stroke="#141c50" stroke-width="1.500"/></svg>
      <span class="a">Accuracy Analyzer(TM)</span>
    </div>
    <div class="bars"><i></i><i class="b2"></i></div>
  </aside>
</main>
<footer class="tools">
  <i class="grip"></i><svg class="crop"><use href="#crop"/></svg><span class="combo">自动<i class="arr"></i></span><span class="combo c2">自动<i class="arr"></i></span><i class="grip ga"></i>
  <div class="pinks">
    <svg><use href="#mesh"/><use href="#eye"/></svg><svg><use href="#meshg"/><use href="#eye"/></svg><svg><use href="#grid9"/><use href="#eye"/></svg><svg><use href="#diam"/><use href="#eye"/></svg><svg><use href="#cube"/><use href="#eye"/></svg><svg><use href="#sketch"/><use href="#eye"/></svg><svg><use href="#sketch3"/><use href="#eye"/></svg><svg><use href="#pts"/><use href="#eye"/></svg><svg><use href="#rline"/><use href="#eye"/></svg><svg><use href="#plane"/><use href="#eye"/></svg><svg><use href="#curve"/><use href="#eye"/></svg><svg><use href="#axes"/><use href="#eye"/></svg><svg><use href="#dim"/><use href="#eye"/></svg>
  </div>
  <i class="arr al"></i><i class="grip gb"></i>
  <div class="picks">
    <svg><use href="#mesh"/><use href="#cur"/></svg><svg class="pk"><use href="#meshg"/><use href="#cur"/></svg><svg class="pk"><use href="#quad"/><use href="#cur"/></svg><svg><use href="#quadpt"/><use href="#cur"/></svg><svg><use href="#ring"/><use href="#cur"/></svg><svg><use href="#cube"/></svg><svg><use href="#cubetop"/><use href="#cur"/></svg><svg><use href="#cubeedge"/><use href="#cur"/></svg><svg><use href="#cubeln"/><use href="#cur"/></svg><svg><use href="#cubept"/><use href="#cur"/></svg><svg><use href="#plane"/><use href="#cur"/></svg><svg><use href="#sketchk"/><use href="#cur"/></svg><svg class="dis"><use href="#dim"/><use href="#cur"/></svg>
  </div>
  <i class="vs"></i><div class="picks"><svg><use href="#docs"/><use href="#cur"/></svg></div><i class="arr al"></i><i class="grip gb"></i>
  <div class="picks"><svg><use href="#dim"/></svg><svg><use href="#angle"/></svg><svg><use href="#radius"/></svg><svg><use href="#thick"/></svg><svg class="dis"><use href="#mesh"/></svg></div><i class="arr al"></i>
</footer>
<div class="status"><i class="tick"></i><i class="field"></i><i class="cell"></i><i class="black"></i><i class="green"></i></div>
</div>
</body>
</html>
```
FILE: styles.css
```css
* { box-sizing: border-box; margin: 0; padding: 0; }
body { width: 1718px; height: 870px; overflow: hidden; background: #f0f0f0; color: #1a1a1a; font: 11px/16px "Open Sans", "Noto Sans CJK SC", sans-serif; }
ul { list-style: none; }
i, em { font-style: normal; display: block; }
.defs { position: absolute; }
.app { display: flex; flex-direction: column; height: 870px; }
.arr { width: 0; height: 0; border: 3px solid transparent; border-top: 4px solid #6a6e72; border-bottom: 0; flex: none; }

.title { display: grid; grid-template-columns: 1fr 129px 1fr; height: 26px; align-items: start; }
.quick { display: flex; gap: 5px; padding: 3px 0 0 2px; align-items: center; }
.quick svg { width: 17px; height: 17px; }
.quick .more { width: 8px; height: 9px; margin-left: 0; }
.logo { width: 16px; height: 16px; margin-right: 6px; background: linear-gradient(#e23a34, #a81a1a); color: #fff; font: bold 10px/16px "Open Sans", sans-serif; text-align: center; letter-spacing: -.5px; }
.title h1 { font-size: 11.5px; font-weight: 400; line-height: 24px; white-space: nowrap; text-align: center; transform: translateX(56px); }
.win { justify-self: end; width: 90px; height: 20px; margin: 2px 8px 0 0; }
.win svg { width: 90px; height: 20px; display: block; }

.tabs { display: flex; height: 25px; }
.tabs span { text-align: center; line-height: 24px; border-bottom: 1px solid #bfbfbf; }
.tabs i { flex: 1; border-bottom: 1px solid #bfbfbf; }
.w53 { width: 53px; } .w50 { width: 50px; } .w64 { width: 64px; } .w73 { width: 73px; } .w41 { width: 41px; } .w60 { width: 60px; }
.tabs .first { padding-left: 3px; }
.tabs .menu { background: #c62a2a; color: #fff; border-color: #c62a2a; }
.tabs .on { width: 49px; margin-top: 1px; line-height: 20px; color: #a32020; background: #fafafa; border: 1px solid #bfbfbf; border-bottom: 0; }

.ribbon { display: flex; height: 99px; background: #fafafa; border-bottom: 1px solid #6f7a80; }
.group { position: relative; display: flex; flex-direction: column; }
.group .body { display: flex; height: 78px; }
.group footer { height: 20px; background: #e7e8ea; border-top: 1px solid #c4c4c4; text-align: center; line-height: 12px; }
.group::after { content: ""; position: absolute; right: -1px; top: 2px; width: 1px; height: 93px; background: #c4c4c4; z-index: 1; }
.rest::after { display: none; }
.seg { width: 103px; } .edit { width: 185px; } .shape { width: 206px; } .rest { flex: 1; }
.seg .body { padding-left: 9px; }
.seg footer, .edit footer, .shape footer { padding-left: 2px; }
.edit .body { padding-left: 7px; }
.big { width: 45px; text-align: center; color: #b9b9b9; padding-top: 8px; }
.edit .big { width: 42px; }
.big svg { width: 30px; height: 30px; display: block; margin: 0 auto 4px; }
.big b { display: block; font-weight: 400; white-space: nowrap; }
.big.on { color: #1a1a1a; }
.small { color: #b9b9b9; padding: 4px 0 0 3px; }
.small li { display: flex; align-items: center; gap: 3px; height: 22px; }
.small svg { width: 16px; height: 16px; }
.group .form { flex-direction: column; padding: 4px 0 0 9px; }
.row { display: flex; height: 21px; white-space: nowrap; }
.row > * { flex: none; }
.row label { width: 44px; line-height: 25px; }
.iso label { width: 43px; line-height: 31px; }
.select { width: 115px; height: 21px; border: 1px solid #a0a0a0; background: #fff; display: flex; align-items: center; justify-content: space-between; padding: 0 4px; font-size: 11.1px; }
.btn { width: 26px; height: 22px; margin-left: 8px; border: 1px solid #c4c4c4; padding-right: 3px; text-align: center; line-height: 19px; font-size: 11.5px; }
.input { width: 70px; height: 21px; border: 1px solid #a0a0a0; background: #fff; text-align: right; padding-right: 2px; line-height: 19px; font-size: 11.5px; }
.allow { padding-left: 47px; align-items: center; gap: 5px; height: 22px; }
.allow svg { width: 11px; height: 11px; }

main { display: flex; height: 684px; }
.side { width: 206px; border-right: 4px solid #f0f0f0; background: #fff; display: flex; flex-direction: column; }
.head { height: 24px; background: #8e9295; color: #fff; display: flex; justify-content: space-between; align-items: center; padding: 0 5px 0 4px; }
.head svg { width: 34px; height: 14px; }
.stabs { height: 25px; background: #f0f0f0; border-bottom: 1px solid #ddd; display: flex; padding-top: 4px; white-space: nowrap; }
.stabs span { display: flex; align-items: center; height: 20px; flex: none; }
.stabs svg { width: 15px; height: 15px; }
.stabs .on { width: 39px; height: 21px; background: #fff; border: 1px solid #c4c4c4; border-bottom: 0; padding-left: 3px; gap: 3px; }
.stabs .disp { width: 56px; padding-left: 6px; gap: 2px; }
.stabs .help { width: 51px; gap: 3px; }
.stabs .vpt { gap: 3px; }
.tree h2, .model h2 { font: 11px/25px "Noto Sans CJK SC", sans-serif; height: 26px; padding-left: 23px; border-bottom: 1px solid #bcbcbc; }
.tree { height: 317px; }
.tree li, .model li { display: flex; align-items: center; height: 20px; font-size: 12px; line-height: 20px; padding-left: 22px; }
.side li svg { width: 16px; height: 16px; margin-right: 5px; flex: none; }
.tree .sub { padding-left: 23px; }
.tree .cap { font-size: 12.5px; }
.dot { width: 8px; height: 8px; border-radius: 50%; background: #959595; margin-right: 7px; }
.tree .imp svg { width: 21px; margin-right: 0; }
.model li { font-weight: 700; padding-left: 7px; }
.model .def { padding-left: 3px; }
.sq { width: 12px; height: 12px; background: #d3d3d3; margin-right: 9px; }
.plus { width: 9px; height: 9px; margin-right: 6px; border: 1px solid #8a8a8a; background: linear-gradient(#2c4a90, #2c4a90) 50% 50% / 5px 1px no-repeat, linear-gradient(#2c4a90, #2c4a90) 50% 50% / 1px 5px no-repeat, #f6f6f6; }
.side li .ey { width: 12px; height: 12px; margin-right: 4px; outline: 1px solid #999; outline-offset: -1px; }

.center { width: 1481px; }
.view { position: relative; height: 662px; }
.scene { display: block; width: 1481px; height: 662px; }
.ax text { font: 11px "Liberation Sans", sans-serif; }
.mm { font: 10px "Liberation Mono", monospace; fill: #222; }
.vbar { position: absolute; left: 473px; top: -1px; width: 535px; height: 30px; display: flex; align-items: center; padding: 0 0 1px 4px; background: #ced2d8; border: 1px solid #7c858b; }
.vbar svg { width: 18px; height: 18px; margin: 0 3px; flex: none; display: block; }
.vbar span { width: 26px; display: flex; justify-content: center; flex: none; }
.vbar .arr { margin: 12px 3px 0 4px; }
.vbar .sep { width: 1px; height: 22px; background: #bcbec0; margin: 0 4px 0 3px; }
.vbar .sep ~ .sep { margin: 0 3px; }
.vbar .pk { width: 24px; height: 22px; margin: 0 1px; background: #e2a7a8; align-items: center; }
.hints { position: absolute; right: 0; top: 0; width: 239px; height: 623px; background: #606060; color: #f4f4f4; padding: 0 8px 0 10px; font-size: 12px; }
.hints li { position: relative; display: flex; height: 42px; padding: 0 10px 2px 2px; align-items: center; border-bottom: 1px solid #aaa; }
.hints li:last-child { border: 0; }
.hints .m { position: relative; width: 17px; height: 25px; margin-left: auto; }
.hints em + .m { margin-left: 2px; }
.hints .m svg { width: 17px; height: 25px; display: block; }
.hints .m .dr { position: absolute; left: -6px; top: -4px; width: 30px; height: 31px; }
.hints em { width: 8px; text-align: center; margin-left: 2px; line-height: 16px; }
.hints kbd { margin: -1px 0 0 auto; width: 26px; height: 19px; border: 1px solid #b9b9b9; border-radius: 1px; font: 9.500px/17px "Noto Sans", sans-serif; text-align: center; letter-spacing: .3px; }
.hints .no { border: 0; width: 26px; margin-top: 1px; }
.hints .x2 { margin-right: -2px; letter-spacing: 1px; }
.hints .two { margin-left: auto; display: flex; flex-direction: column; gap: 1px; }
.hints .two kbd { height: 13px; line-height: 11px; margin: 0; }
.hints .tall { height: 79px; }
.stack { margin-left: auto; display: flex; flex-direction: column; gap: 12px; }
.stack div { display: flex; align-items: center; }
.corner { position: absolute; right: -3px; top: 4px; border-top: 8px solid #444; border-left: 8px solid transparent; }

.vtabs { height: 22px; background: #f0f0f0; border-top: 1px solid #fff; display: flex; }
.la { width: 8px; height: 12px; margin: 5px 6px 0 1px; }
.vtabs span { height: 20px; margin-top: 1px; line-height: 18px; color: #111; text-align: center; }
.vtabs .blue { width: 78px; padding-right: 8px; background: #d8e7fb; clip-path: polygon(0 0, 100% 0, 88% 100%, 15% 100%, 9% 80%); }
.vtabs .yel { width: 54px; margin-left: -8px; padding-right: 17px; padding-left: 2px; background: #fdf087; clip-path: polygon(14% 0, 100% 0, 82% 92%, 78% 100%, 10% 100%, 0 80%); }
.ctl { margin-left: auto; display: flex; align-items: center; padding-right: 4px; }
.ctl svg { width: 9px; height: 12px; margin-right: 8px; }
.ctl b { width: 15px; height: 15px; border: 1px solid #bbb; background: #fff; margin-right: 3px; display: flex; }
.ctl b:last-child { margin-right: 0; }
.ctl b svg { width: 13px; height: 13px; margin: 0; }
.rail { width: 31px; display: flex; justify-content: space-between; border-left: 1px solid #fff; }
.items { padding: 8px 0 0 5px; width: 24px; }
.items svg { display: block; width: 15px; height: 14px; }
.items span { writing-mode: vertical-rl; text-orientation: sideways; display: block; }
.items .p { font-size: 12px; line-height: 14px; margin: 2px 0 0 -1px; height: 26px; }
.items .acc { margin-top: 20px; }
.items .a { font: 10px/14px "Liberation Mono", monospace; margin-top: 3px; margin-left: -1px; white-space: nowrap; }
.bars { width: 6px; padding-top: 7px; }
.bars i { height: 42px; background: #c6c6c6; }
.bars .b2 { height: 144px; margin-top: 20px; }

.tools { height: 29px; display: flex; align-items: center; padding: 0 0 3px 4px; }
.tools svg { flex: none; }
.grip { width: 2px; height: 22px; flex: none; background: repeating-linear-gradient(#bbb 0 2px, transparent 2px 4px); }
.crop { width: 17px; height: 17px; margin: 0 6px 0 9px; }
.combo { width: 46px; height: 24px; border: 1px solid #a5adb8; color: #555; display: flex; align-items: center; justify-content: space-between; padding: 0 4px 3px 3px; margin: 3px 4px 0 0; }
.combo .arr { border-top-color: #aaa; margin-top: 6px; }
.tools .c2 { padding: 0 4px 0 4px; margin-right: 8px; }
.pinks { display: flex; gap: 2px; margin-left: 5px; }
.pinks svg { width: 24px; height: 20px; padding: 1px 3px; background: #e2a7a8; }
.al { margin: 10px 9px 0 3px; }
.gb { margin-right: 5px; }
.picks { display: flex; gap: 2px; }
.picks svg { width: 24px; height: 20px; padding: 1px 3px; }
.picks .pk { background: #e2a7a8; }
.dis { filter: grayscale(1); opacity: .45; }
.vs { width: 1px; height: 24px; background: #c2c2c2; margin: 0 4px 0 5px; }
.status { height: 7px; background: #8e9295; display: flex; justify-content: flex-end; padding: 3px 10px 0 0; }
.status i { height: 4px; }
.status .tick { width: 12px; margin-right: auto; margin-left: 19px; border-top: 1px dotted #fff; height: 2px; align-self: flex-end; }
.status .field { width: 80px; border: 1px solid #aaa; border-bottom: 0; }
.status .cell { width: 11px; background: #e8e8e8; margin-right: 3px; }
.status .black { width: 31px; background: #111; margin-right: 3px; }
.status .green { width: 14px; background: #3bb44a; }
```
